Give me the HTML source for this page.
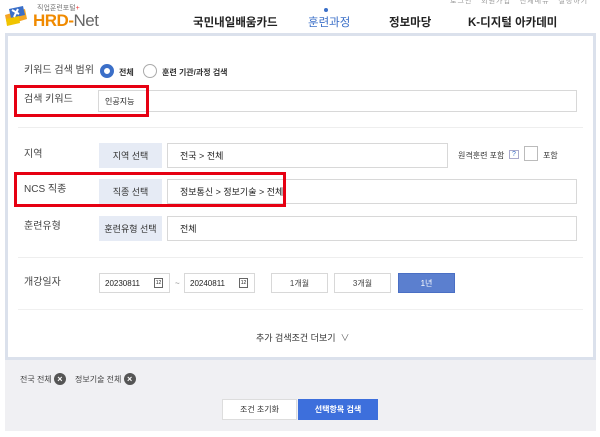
<!DOCTYPE html>
<html><head><meta charset="utf-8"><style>
*{margin:0;padding:0;box-sizing:border-box}
body{width:600px;height:437px;background:#fff;position:relative;overflow:hidden;font-family:"Liberation Sans","Noto Sans CJK KR",sans-serif;color:#333}
.a{position:absolute;white-space:nowrap}
.nav{font-size:11.5px;font-weight:bold;color:#222;top:14px}
.lbl{font-size:10px;color:#444;line-height:12px}
.btn{position:absolute;background:#e6ebf5;font-size:9px;color:#333;display:flex;align-items:center;justify-content:center}
.inp{position:absolute;border:1px solid #d8d8d8;background:#fff;font-size:9px;color:#222;display:flex;align-items:center;padding-left:12px}
.red{position:absolute;border:3px solid #e60012}
.pb{position:absolute;border:1px solid #d8d8d8;background:#fff;font-size:8px;display:flex;align-items:center;justify-content:center;color:#444}
.x{display:inline-block;width:12px;height:12px;border-radius:50%;background:#555;color:#fff;font-size:9px;line-height:12px;text-align:center;font-weight:bold}
</style></head><body>
<div class="a" style="top:-4px;left:450px;font-size:7px;color:#999;letter-spacing:1px">로그인 &nbsp; 회원가입 &nbsp; 전체메뉴 &nbsp; 설정하기</div>
<svg class="a" style="left:3px;top:5px" width="26" height="23" viewBox="0 0 26 23"><path d="M2 10 L22 4 L24 14 L4 20Z" fill="#f5a623"/><path d="M6 4 L20 1 L22 10 L8 13Z" fill="#3b6fc8"/><path d="M3 14 L16 11 L17 18 L4 21Z" fill="#f0c400"/><path d="M9 5 L16 9 M15 4 L11 12" stroke="#fff" stroke-width="2"/></svg>
<div class="a" style="left:37px;top:3px;font-size:7px;color:#777">직업훈련포털<span style="color:#e33">+</span></div>
<div class="a" style="left:33px;top:11px;font-size:17px;font-weight:bold;color:#f08a00;letter-spacing:-0.5px">HRD<span style="color:#f08a00">-</span><span style="color:#666;font-weight:normal">Net</span></div>
<div class="a nav" style="left:193px">국민내일배움카드</div>
<div class="a" style="left:324px;top:8px;width:4px;height:4px;border-radius:50%;background:#3b6fc8"></div>
<div class="a nav" style="left:308px;color:#3b6fc8;font-weight:normal">훈련과정</div>
<div class="a nav" style="left:389px">정보마당</div>
<div class="a nav" style="left:468px">K-디지털 아카데미</div>

<div class="a" style="left:5px;top:360px;width:591px;height:71px;background:#f0f0f3"></div>
<div class="a" style="left:5px;top:33px;width:591px;height:327px;border:3px solid #dbe1ec;background:#fff"></div>

<div class="a lbl" style="left:24px;top:65px">키워드 검색 범위</div>
<div class="a" style="left:100px;top:64px;width:14px;height:14px;border-radius:50%;border:4px solid #3b6fc8;background:#fff"></div>
<div class="a" style="left:119px;top:67px;font-size:8px;font-weight:bold">전체</div>
<div class="a" style="left:143px;top:64px;width:14px;height:14px;border-radius:50%;border:1px solid #aaa"></div>
<div class="a" style="left:162px;top:67px;font-size:8px;font-weight:bold">훈련 기관/과정 검색</div>
<div class="inp" style="left:98px;top:90px;width:479px;height:22px;padding-left:6px;font-size:8px">인공지능</div>
<div class="a lbl" style="left:24px;top:94px">검색 키워드</div>
<div class="red" style="left:14px;top:85px;width:135px;height:32px"></div>
<div class="a" style="left:18px;top:127px;width:565px;height:1px;background:#eee"></div>

<div class="a lbl" style="left:24px;top:149px">지역</div>
<div class="btn" style="left:99px;top:143px;width:63px;height:25px">지역 선택</div>
<div class="inp" style="left:167px;top:143px;width:281px;height:25px">전국 &gt; 전체</div>
<div class="a" style="left:458px;top:150px;font-size:8px">원격훈련 포함</div>
<div class="a" style="left:509px;top:150px;width:10px;height:9px;border:1px solid #aac;color:#3b6fc8;font-size:7px;text-align:center;line-height:8px">?</div>
<div class="a" style="left:524px;top:146px;width:14px;height:15px;border:1px solid #bbb"></div>
<div class="a" style="left:543px;top:150px;font-size:8px">포함</div>

<div class="a lbl" style="left:24px;top:184px">NCS 직종</div>
<div class="btn" style="left:99px;top:179px;width:63px;height:25px">직종 선택</div>
<div class="inp" style="left:167px;top:179px;width:410px;height:25px">정보통신 &gt; 정보기술 &gt; 전체</div>
<div class="red" style="left:14px;top:172px;width:272px;height:35px"></div>

<div class="a lbl" style="left:24px;top:221px">훈련유형</div>
<div class="btn" style="left:99px;top:216px;width:63px;height:25px">훈련유형 선택</div>
<div class="inp" style="left:167px;top:216px;width:410px;height:25px">전체</div>
<div class="a" style="left:18px;top:257px;width:565px;height:1px;background:#eee"></div>

<div class="a lbl" style="left:24px;top:277px">개강일자</div>
<div class="inp" style="left:99px;top:273px;width:71px;height:20px;padding-left:5px;font-size:8px">20230811<span style="position:absolute;right:6px;top:4px;width:9px;height:10px;border:1px solid #666;font-size:5px;text-align:center;line-height:8px">12</span></div>
<div class="a" style="left:175px;top:279px;font-size:8px;color:#888">~</div>
<div class="inp" style="left:184px;top:273px;width:71px;height:20px;padding-left:5px;font-size:8px">20240811<span style="position:absolute;right:6px;top:4px;width:9px;height:10px;border:1px solid #666;font-size:5px;text-align:center;line-height:8px">12</span></div>
<div class="pb" style="left:271px;top:273px;width:57px;height:20px">1개월</div>
<div class="pb" style="left:334px;top:273px;width:57px;height:20px">3개월</div>
<div class="pb" style="left:398px;top:273px;width:57px;height:20px;background:#5b7fcf;border-color:#4a6fc4;color:#fff">1년</div>
<div class="a" style="left:18px;top:309px;width:565px;height:1px;background:#f0f0f0"></div>
<div class="a" style="left:256px;top:331px;font-size:9px;color:#333">추가 검색조건 더보기 &nbsp;<span style="color:#666">∨</span></div>

<div class="a" style="left:20px;top:373px;font-size:8px;color:#444">전국 전체 <span class="x">×</span></div>
<div class="a" style="left:75px;top:373px;font-size:8px;color:#444">정보기술 전체 <span class="x">×</span></div>
<div class="a" style="left:222px;top:399px;width:75px;height:21px;background:#fff;border:1px solid #ddd;font-size:8px;display:flex;align-items:center;justify-content:center">조건 초기화</div>
<div class="a" style="left:298px;top:399px;width:80px;height:21px;background:#3d6fdc;color:#fff;font-size:8px;font-weight:bold;display:flex;align-items:center;justify-content:center">선택항목 검색</div>
</body></html>
